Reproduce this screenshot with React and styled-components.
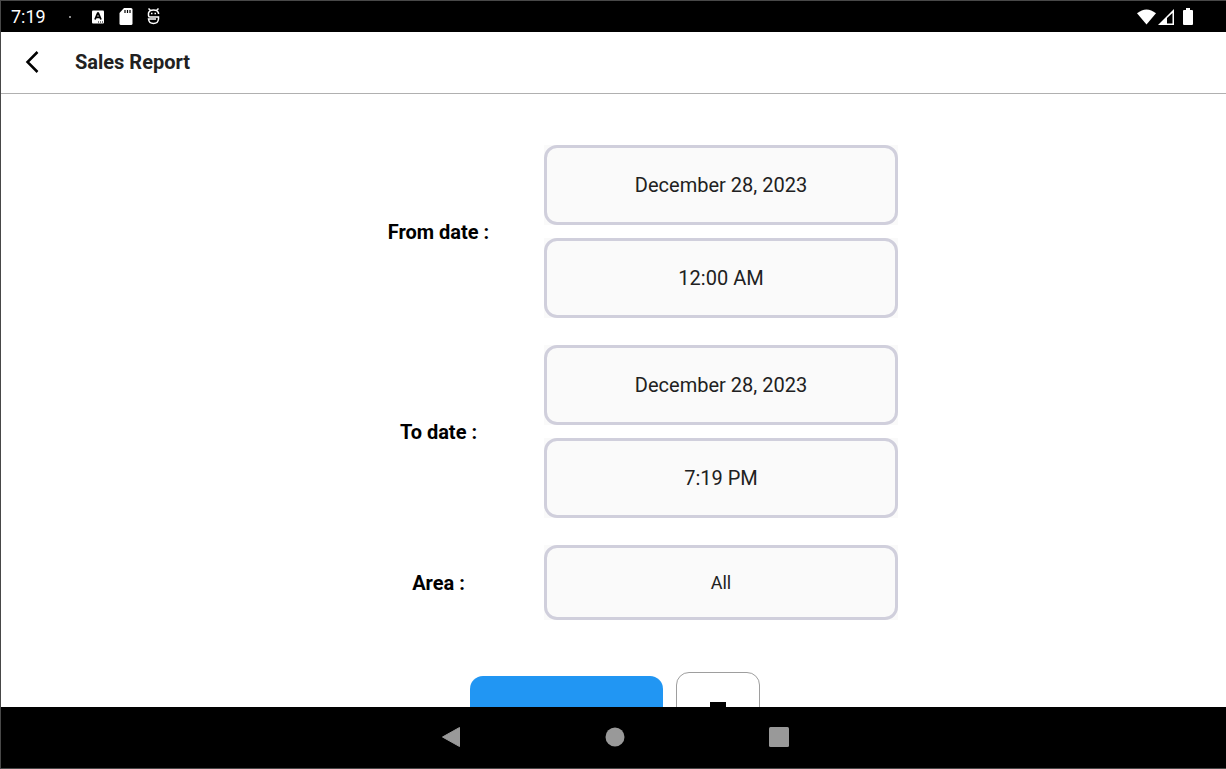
import React from "react";
import styled, { createGlobalStyle } from "styled-components";

const GlobalStyle = createGlobalStyle`
  *, *::before, *::after { box-sizing: border-box; }
  body { margin: 0; background: #fff; }
  body, button, select { font-family: Roboto, "Liberation Sans", sans-serif; }
`;

const Screen = styled.div`
  display: flex;
  flex-direction: column;
  height: 100vh;
  border: 1px solid #484848;
  border-right: 0;
  background: #fff;
  color: #212121;
`;

const StatusBar = styled.div`
  flex: none;
  display: flex;
  align-items: center;
  justify-content: space-between;
  height: 31px;
  padding: 0 33px 0 10px;
  background: #000;
  color: #fff;
  font-size: 18px;
  line-height: 24px;
`;

const StatusGroup = styled.div`
  display: flex;
  align-items: center;
  gap: ${({ $gap }) => $gap}px;
`;

const Clock = styled.time`
  width: 44px;
`;

const Dot = styled.span`
  width: 2px;
  height: 2px;
  margin-right: 6px;
  border-radius: 1px;
  background: #bbb;
`;

const AppBar = styled.header`
  flex: none;
  display: flex;
  align-items: center;
  gap: 25px;
  height: 62px;
  padding: 0 13px 2px;
  border-bottom: 1px solid #b0b0b0;
`;

const IconButton = styled.button`
  display: grid;
  place-items: center;
  width: 36px;
  height: 44px;
  padding: 0;
  border: 0;
  background: transparent;
  color: inherit;
  cursor: pointer;
`;

const Title = styled.h1`
  margin: 0;
  font-size: 20px;
  line-height: 24px;
  font-weight: 700;
`;

const Content = styled.main`
  flex: 1;
  min-height: 0;
  overflow-y: auto;
  scrollbar-width: none;
  padding: 51px 0 51px 4px;
`;

const Form = styled.form`
  display: flex;
  flex-direction: column;
  align-items: center;
  gap: 27px;
`;

const FormRow = styled.div`
  display: grid;
  grid-template-columns: 211px 354px;
  align-items: center;
`;

const Label = styled.label`
  color: #000;
  font-size: 20px;
  line-height: 24px;
  font-weight: 700;
  text-align: center;
`;

const Fields = styled.div`
  display: flex;
  flex-direction: column;
  gap: 13px;
`;

const FieldBack = styled.div`
  display: flex;
  background: #fafafa;
`;

const PickerButton = styled.button`
  flex: 1;
  height: 80px;
  border: 3px solid #d0cfdc;
  border-radius: 13px;
  background: #fafafa;
  color: #212121;
  font-size: 20px;
  line-height: 24px;
  cursor: pointer;
`;

const AreaSelect = styled.select`
  flex: 1;
  height: 75px;
  padding: 0;
  appearance: none;
  border: 3px solid #d0cfdc;
  border-radius: 13px;
  background: #fafafa;
  color: #212121;
  font-size: 18px;
  line-height: 24px;
  text-align: center;
  text-align-last: center;
`;

const Actions = styled.div`
  display: flex;
  align-items: center;
  gap: 13px;
  padding: 25px 2px 0 0;
`;

const SubmitButton = styled.button`
  width: 193px;
  height: 76px;
  border: 0;
  border-radius: 13px;
  background: #2196f3;
  cursor: pointer;
`;

const PrintButton = styled.button`
  display: grid;
  place-items: center;
  width: 84px;
  height: 84px;
  padding: 0;
  border: 1px solid #9e9e9e;
  border-radius: 13px;
  background: #fff;
  color: #000;
  cursor: pointer;
`;

const NavBar = styled.nav`
  flex: none;
  display: flex;
  align-items: center;
  justify-content: center;
  gap: 128px;
  height: 61px;
  padding: 0 0 1px 2px;
  background: #000;
  color: #999;
`;

function DateRow({ id, label, date, time }) {
  return (
    <FormRow>
      <Label htmlFor={id}>{label}</Label>
      <Fields>
        <FieldBack>
          <PickerButton type="button" id={id}>{date}</PickerButton>
        </FieldBack>
        <FieldBack>
          <PickerButton type="button">{time}</PickerButton>
        </FieldBack>
      </Fields>
    </FormRow>
  );
}

export default function App() {
  return (
    <>
      <GlobalStyle />
      <Screen>
        <StatusBar>
          <StatusGroup $gap={14}>
            <Clock>7:19</Clock>
            <Dot />
            <svg width="14" height="14" viewBox="0 0 14 14" aria-hidden="true">
              <rect x="1" y="0.5" width="12" height="13" rx="1" fill="#fff" />
              <path d="M4 9.500 6.700 3.200h.600L10 9.500M5.200 7.400h3.600" fill="none" stroke="#000" strokeWidth="1.800" />
              <path d="M7 12h1M9 12h1M11 12h1" stroke="#000" />
            </svg>
            <svg width="14" height="17" viewBox="0 0 14 17" aria-hidden="true">
              <path d="M5 0h7q1.500 0 1.500 1.500v14q0 1.500-1.500 1.500H2q-1.500 0-1.500-1.500V5z" fill="#fff" />
              <path d="M6 2v3M8.500 2v3M11 2v3" stroke="#000" strokeWidth="1.200" />
            </svg>
            <svg width="14" height="17" viewBox="0 0 14 17" fill="none" stroke="#fff" strokeWidth="1.500" aria-hidden="true">
              <path d="M1.500 0.500 3.500 2.500M11.500 0.500 9.500 2.500" />
              <path d="M11.500 6V5Q10.500 2 6.500 2T1.500 5v2.500q0 1.500 1.500 1.500h8.500v2q-.5 4.500-5 4.500t-5-4.500H9" />
              <path d="M4 5.500h1.500M7.500 5.500H9" />
            </svg>
          </StatusGroup>
          <StatusGroup $gap={2}>
            <svg width="19" height="16" viewBox="0 0 20 16" aria-hidden="true">
              <path d="M0 4Q10-4 20 4L10 16z" fill="#fff" />
            </svg>
            <svg width="23" height="16" viewBox="0 0 23 16" aria-hidden="true">
              <path fillRule="evenodd" d="M16 0v16H0zM14.500 4 9 9v5.500h5.500z" fill="#fff" />
            </svg>
            <svg width="10" height="17" viewBox="0 0 10 17" aria-hidden="true">
              <path d="M3 0h4v2h2q1 0 1 1v13q0 1-1 1H1q-1 0-1-1V3q0-1 1-1h2z" fill="#fff" />
            </svg>
          </StatusGroup>
        </StatusBar>

        <AppBar>
          <IconButton type="button" aria-label="Back">
            <svg width="14" height="22" viewBox="0 0 14 22" fill="none" stroke="#000" strokeWidth="2.500" aria-hidden="true">
              <path d="M12.500 1 2.500 11l10 10" />
            </svg>
          </IconButton>
          <Title>Sales Report</Title>
        </AppBar>

        <Content>
          <Form>
            <DateRow id="from-date" label="From date :" date="December 28, 2023" time="12:00 AM" />
            <DateRow id="to-date" label="To date :" date="December 28, 2023" time="7:19 PM" />
            <FormRow>
              <Label htmlFor="area">Area :</Label>
              <FieldBack>
                <AreaSelect id="area" defaultValue="all">
                  <option value="all">All</option>
                </AreaSelect>
              </FieldBack>
            </FormRow>
            <Actions>
              <SubmitButton type="button" aria-label="Show report" />
              <PrintButton type="button" aria-label="Print">
                <svg width="32" height="32" viewBox="0 0 24 24" fill="currentColor" aria-hidden="true">
                  <path d="M19 8H5c-1.660 0-3 1.340-3 3v6h4v4h12v-4h4v-6c0-1.660-1.340-3-3-3zm-3 11H8v-5h8v5zm3-7c-.550 0-1-.450-1-1s.450-1 1-1 1 .450 1 1-.450 1-1 1zm-1-9H6v4h12V3z" />
                </svg>
              </PrintButton>
            </Actions>
          </Form>
        </Content>

        <NavBar aria-label="System">
          <IconButton type="button" aria-label="Back">
            <svg width="20" height="22" viewBox="0 0 20 22" aria-hidden="true">
              <path d="M1.500 11 18.500 1.500v19z" fill="currentColor" stroke="currentColor" strokeWidth="1" strokeLinejoin="round" />
            </svg>
          </IconButton>
          <IconButton type="button" aria-label="Home">
            <svg width="20" height="20" viewBox="0 0 20 20" aria-hidden="true">
              <circle cx="10" cy="10" r="9.500" fill="currentColor" />
            </svg>
          </IconButton>
          <IconButton type="button" aria-label="Overview">
            <svg width="20" height="20" viewBox="0 0 20 20" aria-hidden="true">
              <rect width="20" height="20" rx="1.500" fill="currentColor" />
            </svg>
          </IconButton>
        </NavBar>
      </Screen>
    </>
  );
}
